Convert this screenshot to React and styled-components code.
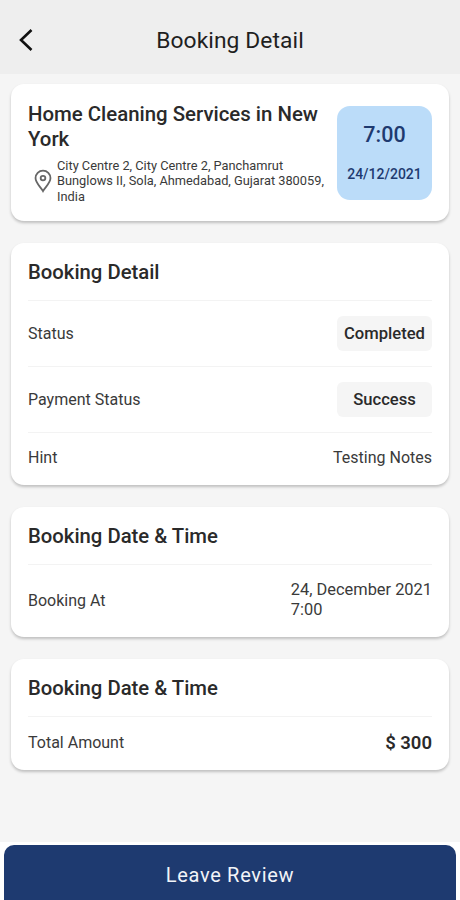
import styled, { createGlobalStyle } from "styled-components"

const GlobalStyle = createGlobalStyle`
  html, body {
    margin: 0;
    padding: 0;
    background: #f5f5f5;
  }
  * {
    box-sizing: border-box;
  }
`;

function App() {
  return (
    <Page>
      <GlobalStyle />
      <Header>
        <BackIcon viewBox="0 0 16 24">
          <path d="M13.5 2 3 12l10.5 10" />
        </BackIcon>
        <HeaderTitle>Booking Detail</HeaderTitle>
      </Header>
      <Content>
        <ServiceCard>
          <ServiceInfo>
            <ServiceName>Home Cleaning Services in New York</ServiceName>
            <Address>
              <PinIcon viewBox="0 0 20 26">
                <path d="M10 1.5C5.3 1.5 1.7 5.2 1.7 9.8c0 5.6 5.6 9.6 8.3 14.4 2.7-4.8 8.3-8.8 8.3-14.4 0-4.6-3.6-8.3-8.3-8.3Z" />
                <circle cx="10" cy="9.8" r="2.6" />
              </PinIcon>
              <AddressText>
                City Centre 2, City Centre 2, Panchamrut Bunglows II, Sola, Ahmedabad, Gujarat 380059, India
              </AddressText>
            </Address>
          </ServiceInfo>
          <TimeBox>
            <TimeText>7:00</TimeText>
            <DateText>24/12/2021</DateText>
          </TimeBox>
        </ServiceCard>

        <Card>
          <CardTitle>Booking Detail</CardTitle>
          <Row $height={66}>
            <Label>Status</Label>
            <Chip>Completed</Chip>
          </Row>
          <Row $height={66}>
            <Label>Payment Status</Label>
            <Chip>Success</Chip>
          </Row>
          <Row $height={53} $pb={4}>
            <Label>Hint</Label>
            <Label>Testing Notes</Label>
          </Row>
        </Card>

        <Card>
          <CardTitle>Booking Date &amp; Time</CardTitle>
          <Row $height={73} $pb={2}>
            <Label>Booking At</Label>
            <DateBlock>
              <span>24, December 2021</span>
              <span>7:00</span>
            </DateBlock>
          </Row>
        </Card>

        <Card>
          <CardTitle>Booking Date &amp; Time</CardTitle>
          <Row $height={54} $pb={2}>
            <Label>Total Amount</Label>
            <Amount>$ 300</Amount>
          </Row>
        </Card>
      </Content>
      <Footer>
        <ReviewButton>Leave Review</ReviewButton>
      </Footer>
    </Page>
  )
}

export default App

const Page = styled.div`
  width: 460px;
  height: 900px;
  overflow: hidden;
  display: flex;
  flex-direction: column;
  background: #f5f5f5;
  font-family: Roboto, "Liberation Sans", sans-serif;
  color: #222;
`;
const Header = styled.div`
  position: relative;
  height: 74px;
  flex-shrink: 0;
  display: flex;
  align-items: center;
  justify-content: center;
  padding-top: 7px;
  background: #eeeeee;
`;
const BackIcon = styled.svg`
  position: absolute;
  left: 18px;
  top: 28px;
  width: 16px;
  height: 24px;
  fill: none;
  stroke: #111;
  stroke-width: 2.6;
`;
const HeaderTitle = styled.div`
  font-size: 22.8px;
  letter-spacing: 0.1px;
  color: #1f1f1f;
`;
const Content = styled.div`
  flex: 1;
  display: flex;
  flex-direction: column;
  gap: 22px;
  padding: 10px 11px 0;
`;
const Card = styled.div`
  background: #fff;
  border-radius: 13px;
  padding: 0 17px;
  box-shadow: 0 2px 3px rgba(0, 0, 0, 0.22);
`;
const ServiceCard = styled(Card)`
  height: 137px;
  display: flex;
  justify-content: space-between;
  padding: 18px 17px 0 17px;
`;
const ServiceInfo = styled.div`
  width: 300px;
`;
const ServiceName = styled.div`
  font-size: 20.4px;
  line-height: 25px;
  font-weight: 500;
  color: #2a2a2a;
`;
const Address = styled.div`
  display: flex;
  align-items: center;
  gap: 5px;
  margin-top: 6px;
  margin-left: 6px;
`;
const PinIcon = styled.svg`
  width: 18px;
  height: 24px;
  flex-shrink: 0;
  fill: none;
  stroke: #666;
  stroke-width: 2;
`;
const AddressText = styled.div`
  width: 272px;
  font-size: 12.8px;
  line-height: 15.4px;
  color: #3a3a3a;
`;
const TimeBox = styled.div`
  width: 95px;
  height: 94px;
  margin-top: 4px;
  flex-shrink: 0;
  display: flex;
  flex-direction: column;
  align-items: center;
  gap: 18px;
  padding-top: 17px;
  border-radius: 13px;
  background: #bbdcf9;
  color: #1e3a70;
  font-weight: 500;
`;
const TimeText = styled.div`
  font-size: 21.5px;
  line-height: 24px;
`;
const DateText = styled.div`
  font-size: 14px;
  line-height: 18px;
`;
const CardTitle = styled.div`
  height: 57px;
  display: flex;
  align-items: center;
  font-size: 20.3px;
  font-weight: 500;
  color: #2a2a2a;
`;
const Row = styled.div`
  height: ${(p) => p.$height}px;
  display: flex;
  align-items: center;
  justify-content: space-between;
  padding-bottom: ${(p) => p.$pb || 0}px;
  border-top: 1px solid #f3f3f3;
`;
const Label = styled.div`
  font-size: 16px;
  color: #3a3a3a;
`;
const Chip = styled.div`
  width: 95px;
  height: 35px;
  display: flex;
  align-items: center;
  justify-content: center;
  border-radius: 6px;
  background: #f5f5f5;
  font-size: 16.6px;
  font-weight: 500;
  color: #2a2a2a;
`;
const DateBlock = styled.div`
  display: flex;
  flex-direction: column;
  font-size: 16.4px;
  line-height: 20px;
  color: #3a3a3a;
`;
const Amount = styled.div`
  font-size: 18.5px;
  font-weight: 600;
  color: #2a2a2a;
`;
const Footer = styled.div`
  height: 58px;
  flex-shrink: 0;
  padding: 3px 4px 0;
  background: #fff;
`;
const ReviewButton = styled.button`
  width: 100%;
  height: 55px;
  border: none;
  padding: 4px 0 0;
  border-radius: 10px 10px 0 0;
  background: #1e3a70;
  color: #f2f4f8;
  font-family: inherit;
  font-size: 20px;
  letter-spacing: 0.7px;
`;
